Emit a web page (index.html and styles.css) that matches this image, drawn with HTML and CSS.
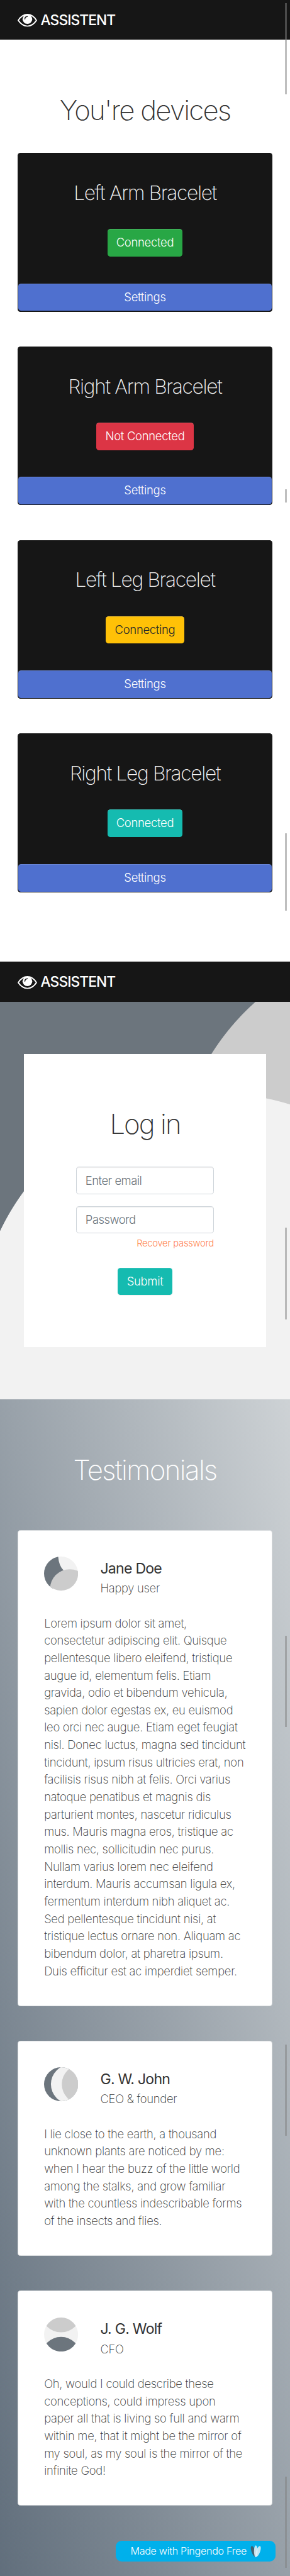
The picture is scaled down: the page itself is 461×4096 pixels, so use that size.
FILE: index.html
```html
<!DOCTYPE html>
<html lang="en">
<head>
<meta charset="utf-8">
<title>Assistent</title>
<link rel="stylesheet" href="styles.css">
</head>
<body>
<svg width="0" height="0" class="defs" aria-hidden="true">
  <symbol id="eye" viewBox="0 0 54 36">
    <path d="M1.700 18C8 8 16 1.700 27 1.700S46 8 52 18C46 27 38 34 27 34S8 27 1.700 18Z" fill="none" stroke="#fff" stroke-width="3.200" stroke-linejoin="round"/>
    <circle cx="27" cy="14.500" r="13.400" fill="#fff"/>
    <path d="M20 14.500Q20 7.500 27 7.200" fill="none" stroke="#161616" stroke-width="2.600" stroke-linecap="round"/>
  </symbol>
</svg>

<nav class="navbar"><svg class="eye"><use href="#eye"/></svg><span class="brand">ASSISTENT</span></nav>

<main class="devices">
  <h1 class="title t-devices"><span>You're devices</span></h1>
  <section class="device">
    <h2 class="device-name"><span>Left Arm Bracelet</span></h2>
    <a class="btn status ok"><span>Connected</span></a>
    <a class="btn settings"><span>Settings</span></a>
  </section>
  <section class="device">
    <h2 class="device-name"><span>Right Arm Bracelet</span></h2>
    <a class="btn status off"><span>Not Connected</span></a>
    <a class="btn settings"><span>Settings</span></a>
  </section>
  <section class="device">
    <h2 class="device-name"><span>Left Leg Bracelet</span></h2>
    <a class="btn status wait"><span>Connecting</span></a>
    <a class="btn settings"><span>Settings</span></a>
  </section>
  <section class="device">
    <h2 class="device-name"><span>Right Leg Bracelet</span></h2>
    <a class="btn status teal"><span>Connected</span></a>
    <a class="btn settings"><span>Settings</span></a>
  </section>
</main>

<nav class="navbar"><svg class="eye"><use href="#eye"/></svg><span class="brand">ASSISTENT</span></nav>

<section class="login">
  <form class="login-card">
    <h1 class="title t-login"><span>Log in</span></h1>
    <div class="field"><span>Enter email</span></div>
    <div class="field"><span>Password</span></div>
    <a class="recover"><span>Recover password</span></a>
    <a class="btn submit teal"><span>Submit</span></a>
  </form>
</section>

<section class="testimonials">
  <h1 class="title t-test"><span>Testimonials</span></h1>
  <article class="quote">
    <header class="person">
      <svg class="avatar" viewBox="0 0 94 94">
        <clipPath id="c"><circle cx="47" cy="47" r="47"/></clipPath>
        <g clip-path="url(#c)"><rect width="94" height="94" fill="#f2f2f2"/><path d="M39 0Q41 26 54 38L20 94H-5V0Z" fill="#6c757d"/><circle cx="71" cy="89.500" r="54.500" fill="#ccc"/></g>
      </svg>
      <div><p class="name"><span>Jane Doe</span></p><p class="role"><span>Happy user</span></p></div>
    </header>
    <p class="text"><span>Lorem ipsum dolor sit amet,<br>consectetur adipiscing elit. Quisque<br>pellentesque libero eleifend, tristique<br>augue id, elementum felis. Etiam<br>gravida, odio et bibendum vehicula,<br>sapien dolor egestas ex, eu euismod<br>leo orci nec augue. Etiam eget feugiat<br>nisl. Donec luctus, magna sed tincidunt<br>tincidunt, ipsum risus ultricies erat, non<br>facilisis risus nibh at felis. Orci varius<br>natoque penatibus et magnis dis<br>parturient montes, nascetur ridiculus<br>mus. Mauris magna eros, tristique ac<br>mollis nec, sollicitudin nec purus.<br>Nullam varius lorem nec eleifend<br>interdum. Mauris accumsan ligula ex,<br>fermentum interdum nibh aliquet ac.<br>Sed pellentesque tincidunt nisi, at<br>tristique lectus ornare non. Aliquam ac<br>bibendum dolor, at pharetra ipsum.<br>Duis efficitur est ac imperdiet semper.</span></p>
  </article>
  <article class="quote">
    <header class="person">
      <svg class="avatar" viewBox="0 0 94 94">
        <g clip-path="url(#c)"><rect width="94" height="94" fill="#6c757d"/><circle cx="73.500" cy="47" r="54.500" fill="#f2f2f2"/><circle cx="103.500" cy="47" r="54.500" fill="#ccc"/></g>
      </svg>
      <div><p class="name"><span>G. W. John</span></p><p class="role"><span>CEO &amp; founder</span></p></div>
    </header>
    <p class="text"><span>I lie close to the earth, a thousand<br>unknown plants are noticed by me:<br>when I hear the buzz of the little world<br>among the stalks, and grow familiar<br>with the countless indescribable forms<br>of the insects and flies.</span></p>
  </article>
  <article class="quote">
    <header class="person">
      <svg class="avatar" viewBox="0 0 94 94">
        <g clip-path="url(#c)"><rect width="94" height="94" fill="#f2f2f2"/><circle cx="47" cy="-13.500" r="54.500" fill="#ccc"/><circle cx="47" cy="108" r="54.500" fill="#6c757d"/></g>
      </svg>
      <div><p class="name"><span>J. G. Wolf</span></p><p class="role"><span>CFO</span></p></div>
    </header>
    <p class="text"><span>Oh, would I could describe these<br>conceptions, could impress upon<br>paper all that is living so full and warm<br>within me, that it might be the mirror of<br>my soul, as my soul is the mirror of the<br>infinite God!</span></p>
  </article>
</section>

<a class="made"><span>Made with Pingendo Free</span>
  <svg class="leaf" viewBox="0 0 30 34"><ellipse cx="8.500" cy="17" rx="5.500" ry="15.500" transform="rotate(-20 8.500 17)" fill="#3f6070"/><ellipse cx="21.500" cy="17" rx="5.500" ry="15.500" transform="rotate(20 21.500 17)" fill="#bfe6f5"/><ellipse cx="15" cy="17" rx="5" ry="16.500" fill="#dff1f9" fill-opacity=".85"/></svg>
</a>

<i class="scroll s1"></i><i class="scroll s2"></i><i class="scroll s3"></i><i class="scroll s4"></i><i class="scroll s5"></i><i class="scroll s6"></i><i class="scroll s7"></i>
</body>
</html>
```
FILE: styles.css
```css
/* 1rem = 100 design pixels */
html { font-size: 57.625px; }
* { box-sizing: border-box; margin: 0; }
body { position: relative; height: 4096px; overflow: hidden; background: #fff; color: #333; font: 300 .32rem/.48rem Inter, sans-serif; }
.defs { position: absolute; }

.navbar { height: 1.1rem; background: #161616; display: flex; align-items: center; padding: 0 .48rem; }
.eye { width: .54rem; height: .36rem; margin: .04rem .1rem 0 0; }
.brand { color: #fff; font-size: .395rem; font-weight: 500; letter-spacing: -.04em; }

.title { font-size: .76rem; font-weight: 200; line-height: .96rem; text-align: center; white-space: nowrap; letter-spacing: -.04em; }
.devices { height: 25.44rem; padding: 1.46rem .48rem 0; }
.t-devices { margin-bottom: .7rem; }
.device { height: 4.38rem; margin-bottom: .96rem; padding: .02rem; border-radius: .08rem; background: #161616; display: flex; flex-direction: column; align-items: center; }
.device-name { margin-top: .74rem; color: #f2f2f2; font-size: .55rem; line-height: .68rem; font-weight: 250; white-space: nowrap; letter-spacing: -.042em; }

.btn { display: flex; align-items: center; justify-content: center; height: .76rem; border-radius: .08rem; color: #fff; white-space: nowrap; letter-spacing: -.016em; box-shadow: inset 0 1px 0 rgba(255,255,255,.15); }
.status { margin-top: .66rem; width: 2.08rem; }
.ok { background: #28a745; }
.off { width: 2.68rem; background: #dc3545; }
.wait { width: 2.16rem; background: #ffc107; color: #212529; }
.teal { background: #15bbb0; }
.settings { align-self: stretch; margin-top: auto; background: #4f70cf; }

.login { height: 10.98rem; padding: 1.44rem .66rem; background: radial-gradient(circle at 6.01rem 9.18rem, #f2f2f2 6.645rem, transparent 6.66rem), radial-gradient(circle at 11.47rem 4.97rem, #ccc 6.645rem, #6c757d 6.66rem); }
.login-card { height: 8.1rem; background: #fff; padding: 1.46rem 1.44rem 0; display: flex; flex-direction: column; }
.t-login { margin-bottom: .7rem; letter-spacing: -.045em; }
.field { height: .76rem; margin-bottom: .32rem; padding: 0 .24rem; display: flex; align-items: center; border: .02rem solid #ced4da; border-radius: .08rem; color: #6c757d; letter-spacing: -.028em; box-shadow: inset 0 1px 1px rgba(0,0,0,.075); }
.recover { align-self: flex-end; margin-top: -.22rem; color: #ff7f50; font-size: .256rem; line-height: .38rem; letter-spacing: -.018em; }
.submit { align-self: center; width: 1.52rem; margin-top: .46rem; box-shadow: inset 0 1px 0 rgba(255,255,255,.15), 0 1px 1px rgba(0,0,0,.075); }

.testimonials { height: 32.46rem; padding: 1.46rem .48rem 0; background: linear-gradient(to left bottom, rgba(189,195,199,.75), rgba(44,62,80,.75)); }
.t-test { color: #fff; margin-bottom: 1.18rem; letter-spacing: -.037em; }
.quote { margin-bottom: .96rem; padding: .72rem .72rem .7rem; border: .02rem solid #d9dcde; border-radius: .08rem; background: #fff; }
.person { display: flex; height: 1.6rem; }
.avatar { width: .94rem; height: .94rem; margin-right: .61rem; }
.name { margin-top: .095rem; font-size: .4rem; line-height: .48rem; font-weight: 400; letter-spacing: -.032em; }
.role { margin-top: .065rem; font-weight: 250; letter-spacing: -.015em; }
.text { font-weight: 250; white-space: nowrap; letter-spacing: -.014em; }

.made { position: absolute; left: 3.2rem; top: 70.1rem; width: 4.4rem; height: .58rem; padding: .02rem .4rem 0; display: flex; align-items: center; justify-content: space-between; border-radius: .16rem; background: #00b0eb; color: #fff; font-size: .28rem; white-space: nowrap; letter-spacing: -.019em; }
.leaf { width: .3rem; height: .34rem; }

.scroll { position: absolute; left: 7.86rem; width: .06rem; height: 2.52rem; background: rgba(128,128,128,.5); }
.s1 { top: .08rem; }
.s2 { top: 13.5rem; height: .36rem; }
.s3 { top: 23rem; height: 2.12rem; }
.s4 { top: 33.88rem; }
.s5 { top: 45.14rem; }
.s6 { top: 56.42rem; }
.s7 { top: 68.34rem; }
```
